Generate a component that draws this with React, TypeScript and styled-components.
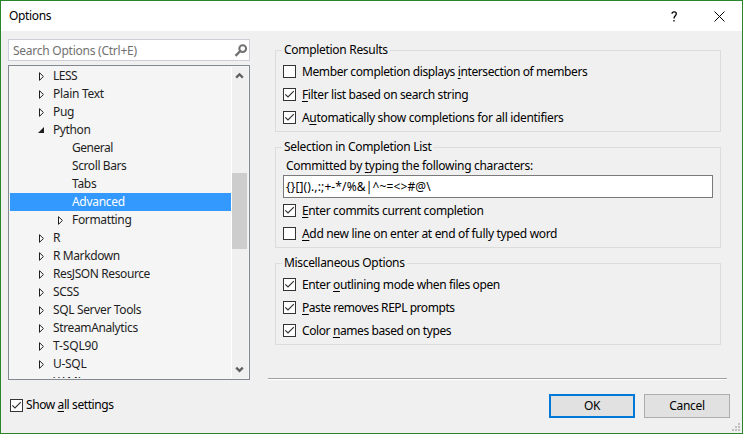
import React from "react";
import styled, { createGlobalStyle } from "styled-components";

const Global = createGlobalStyle`
  * { box-sizing: border-box; }
  body { margin: 0; overflow: hidden; background: #f0f0f0; }
  svg { display: block; }
`;

const Window = styled.div`
  width: 743px;
  height: 434px;
  display: flex;
  flex-direction: column;
  position: relative;
  border: 1px solid #2a8429;
  background: #f0f0f0;
  color: #000;
  font: 12px/18px "Noto Sans", "Open Sans", sans-serif;
`;

const Text = styled.span<{ $ls?: number }>`
  display: block;
  flex: none;
  white-space: pre;
  letter-spacing: ${(p) => p.$ls ?? -0.3}px;
  u {
    text-decoration-thickness: 1px;
    text-underline-offset: 2px;
    text-decoration-skip-ink: none;
  }
`;

const TitleBar = styled.header`
  height: 30px;
  flex: none;
  display: flex;
  align-items: center;
  padding: 0 17px 0 8px;
  background: #fff;
`;

const TitleButtons = styled.div`
  margin-left: auto;
  display: flex;
  align-items: center;
  gap: 36px;
`;

const Body = styled.main`
  display: flex;
  height: 349px;
  flex: none;
  padding: 8px 14px 0 7px;
`;

const Sidebar = styled.div`
  width: 242px;
  display: flex;
  flex-direction: column;
  gap: 4px;
`;

const Search = styled.div`
  height: 22px;
  display: flex;
  align-items: center;
  justify-content: space-between;
  padding: 1px 1px 0 4px;
  border: 1px solid #cccedb;
  background: #fff;
  color: #717171;
`;

const Tree = styled.div`
  height: 315px;
  display: flex;
  padding: 1px;
  border: 1px solid #828790;
  background: #f5f5f5;
`;

const Rows = styled.div`
  width: 221px;
  flex: none;
  height: 311px;
  overflow: hidden;
  color: #1e1e1e;
`;

const Row = styled.div<{ $level: number; $selected?: boolean }>`
  height: 18px;
  display: flex;
  align-items: center;
  padding-left: ${(p) => 28 + p.$level * 19}px;
  background: ${(p) => (p.$selected ? "#3399ff" : "transparent")};
  color: ${(p) => (p.$selected ? "#fff" : "#1e1e1e")};
`;

const Expander = styled.div`
  width: 15px;
  flex: none;
`;

const ScrollBar = styled.div`
  width: 17px;
  flex: none;
  height: 311px;
  display: flex;
  flex-direction: column;
  justify-content: space-between;
  border-left: 1px solid #fff;
  background: #f0f0f0;
`;

const ScrollThumb = styled.div`
  width: 15px;
  height: 76px;
  margin-top: 89px;
  margin-bottom: auto;
  background: #cdcdcd;
`;

const Panel = styled.div`
  width: 460px;
  margin-left: 18px;
  display: flex;
  flex-direction: column;
  padding: 3px 7px 0 7px;
`;

const Group = styled.section<{ $height: number }>`
  height: ${(p) => p.$height}px;
  flex: none;
  display: flex;
  flex-direction: column;
  margin-top: 8px;
  margin-bottom: 7px;
  border: 1px solid #dcdcdc;
  padding: 0 7px;
`;

const Legend = styled.div`
  height: 18px;
  align-self: flex-start;
  flex: none;
  margin: -10px 0 1px -1px;
  padding: 0 2px;
  background: #f0f0f0;
`;

const Option = styled.div`
  height: 23px;
  flex: none;
  display: flex;
  align-items: center;
  gap: 6px;
`;

const Box = styled.div`
  width: 13px;
  height: 13px;
  flex: none;
  border: 1px solid #333;
  background: #fff;
`;

const FieldLabel = styled.div`
  height: 18px;
  flex: none;
  padding-left: 3px;
`;

const Field = styled.div`
  height: 23px;
  flex: none;
  margin-bottom: 1px;
  padding: 0 2px;
  display: flex;
  align-items: center;
  border: 1px solid #7a7a7a;
  background: #fff;
`;

const Divider = styled.div`
  width: 459px;
  height: 2px;
  margin: -2px 0 0 267px;
  flex: none;
  border-top: 1px solid #a0a0a0;
  border-bottom: 1px solid #fff;
`;

const Footer = styled.footer`
  display: flex;
  align-items: center;
  height: 24px;
  margin: 14px 12px 0 9px;
`;

const ShowAll = styled.div`
  display: flex;
  align-items: center;
  gap: 3px;
  height: 18px;
  margin: -2px auto 0 0;
`;

const Button = styled.button<{ $primary?: boolean }>`
  width: 86px;
  height: 24px;
  margin: 0 0 0 9px;
  padding: 0;
  display: flex;
  align-items: center;
  justify-content: center;
  border: ${(p) => (p.$primary ? "2px solid #0078d7" : "1px solid #adadad")};
  background: #e1e1e1;
  color: #000;
  font: inherit;
`;

const Grip = styled.svg`
  position: absolute;
  right: 2px;
  bottom: 2px;
`;

type Node = { text: string; ls?: number; level: number; state?: "open" | "closed"; selected?: boolean };

const nodes: Node[] = [
  { text: "LESS", ls: -0.5, level: 0, state: "closed" },
  { text: "Plain Text", level: 0, state: "closed" },
  { text: "Pug", level: 0, state: "closed" },
  { text: "Python", ls: -0.4, level: 0, state: "open" },
  { text: "General", ls: -0.5, level: 1 },
  { text: "Scroll Bars", ls: -0.4, level: 1 },
  { text: "Tabs", level: 1 },
  { text: "Advanced", level: 1, selected: true },
  { text: "Formatting", ls: -0.35, level: 1, state: "closed" },
  { text: "R", level: 0, state: "closed" },
  { text: "R Markdown", ls: -0.4, level: 0, state: "closed" },
  { text: "ResJSON Resource", ls: -0.4, level: 0, state: "closed" },
  { text: "SCSS", level: 0, state: "closed" },
  { text: "SQL Server Tools", ls: -0.35, level: 0, state: "closed" },
  { text: "StreamAnalytics", ls: -0.37, level: 0, state: "closed" },
  { text: "T-SQL90", ls: -0.15, level: 0, state: "closed" },
  { text: "U-SQL", level: 0, state: "closed" },
  { text: "XAML", level: 0 },
];

const Triangle = ({ open }: { open: boolean }) => (
  <svg width="8" height="10" viewBox="0 0 8 10">
    {open ? (
      <path d="M6 2v6H0z" fill="#1e1e1e" />
    ) : (
      <path d="M1.5 1.7v7.6L5.4 5.5z" fill="#fff" stroke="#1e1e1e" />
    )}
  </svg>
);

const Check = ({ checked }: { checked?: boolean }) => (
  <Box>
    {checked && (
      <svg width="11" height="11" viewBox="0 0 11 11">
        <path d="M1.3 5.3l2.7 2.7L9.8 2.2" fill="none" stroke="#333" strokeWidth="1.2" />
      </svg>
    )}
  </Box>
);

const Arrow = ({ down }: { down?: boolean }) => (
  <svg width="15" height="17" viewBox="0 0 15 17">
    <path d={down ? "M4.2 6.6l3.3 3.3 3.3-3.3" : "M4.2 10.6l3.3-3.3 3.3 3.3"} fill="none" stroke="#606060" strokeWidth="2.3" />
  </svg>
);

export default function App() {
  return (
    <>
      <Global />
      <Window>
        <TitleBar>
          <Text $ls={-0.35}>Options</Text>
          <TitleButtons>
            <svg width="7" height="11" viewBox="0 0 7 11">
              <path d="M1 2.8C1 .2 5.3.2 5.3 2.7c0 2-2.3 2.1-2.3 4.8M3 9v1.5" fill="none" stroke="#000" strokeWidth="1.3" />
            </svg>
            <svg width="11" height="11" viewBox="0 0 11 11">
              <path d="M.5.5l10 10M10.5.5l-10 10" stroke="#000" fill="none" />
            </svg>
          </TitleButtons>
        </TitleBar>
        <Body>
          <Sidebar>
            <Search>
              <Text $ls={-0.25}>Search Options (Ctrl+E)</Text>
              <svg width="14" height="14" viewBox="0 0 14 14">
                <circle cx="8.7" cy="4.6" r="3.4" fill="none" stroke="#717171" strokeWidth="2" />
                <path d="M6.3 7L1.5 11.8" stroke="#717171" strokeWidth="2.4" />
              </svg>
            </Search>
            <Tree>
              <Rows>
                {nodes.map((n) => (
                  <Row key={n.text} $level={n.level} $selected={n.selected}>
                    <Expander>{n.state && <Triangle open={n.state === "open"} />}</Expander>
                    <Text $ls={n.ls}>{n.text}</Text>
                  </Row>
                ))}
              </Rows>
              <ScrollBar>
                <Arrow />
                <ScrollThumb />
                <Arrow down />
              </ScrollBar>
            </Tree>
          </Sidebar>
          <Panel>
            <Group $height={82}>
              <Legend><Text>Completion Results</Text></Legend>
              <Option><Check /><Text $ls={-0.39}>Member completion displays <u>i</u>ntersection of members</Text></Option>
              <Option><Check checked /><Text $ls={-0.38}><u>F</u>ilter list based on search string</Text></Option>
              <Option><Check checked /><Text $ls={-0.32}>A<u>u</u>tomatically show completions for all identifiers</Text></Option>
            </Group>
            <Group $height={101}>
              <Legend><Text>Selection in Completion List</Text></Legend>
              <FieldLabel><Text>Committed by <u>t</u>yping the following characters:</Text></FieldLabel>
              <Field><Text $ls={0.13}>{"{}[]().,:;+-*/%&|^~=<>#@\\"}</Text></Field>
              <Option><Check checked /><Text $ls={-0.36}><u>E</u>nter commits current completion</Text></Option>
              <Option><Check /><Text $ls={-0.33}><u>A</u>dd new line on enter at end of fully typed word</Text></Option>
            </Group>
            <Group $height={82}>
              <Legend><Text $ls={-0.33}>Miscellaneous Options</Text></Legend>
              <Option><Check checked /><Text $ls={-0.38}>Enter <u>o</u>utlining mode when files open</Text></Option>
              <Option><Check checked /><Text $ls={-0.45}><u>P</u>aste removes REPL prompts</Text></Option>
              <Option><Check checked /><Text $ls={-0.4}>Color <u>n</u>ames based on types</Text></Option>
            </Group>
          </Panel>
        </Body>
        <Divider />
        <Footer>
          <ShowAll><Check checked /><Text $ls={-0.4}>Show <u>a</u>ll settings</Text></ShowAll>
          <Button $primary><Text>OK</Text></Button>
          <Button><Text>Cancel</Text></Button>
        </Footer>
        <Grip width="8" height="8" viewBox="0 0 8 8" fill="#bfbfbf">
          <path d="M6 0h2v2H6zM3 3h2v2H3zM6 3h2v2H6zM0 6h2v2H0zM3 6h2v2H3zM6 6h2v2H6z" />
        </Grip>
      </Window>
    </>
  );
}
